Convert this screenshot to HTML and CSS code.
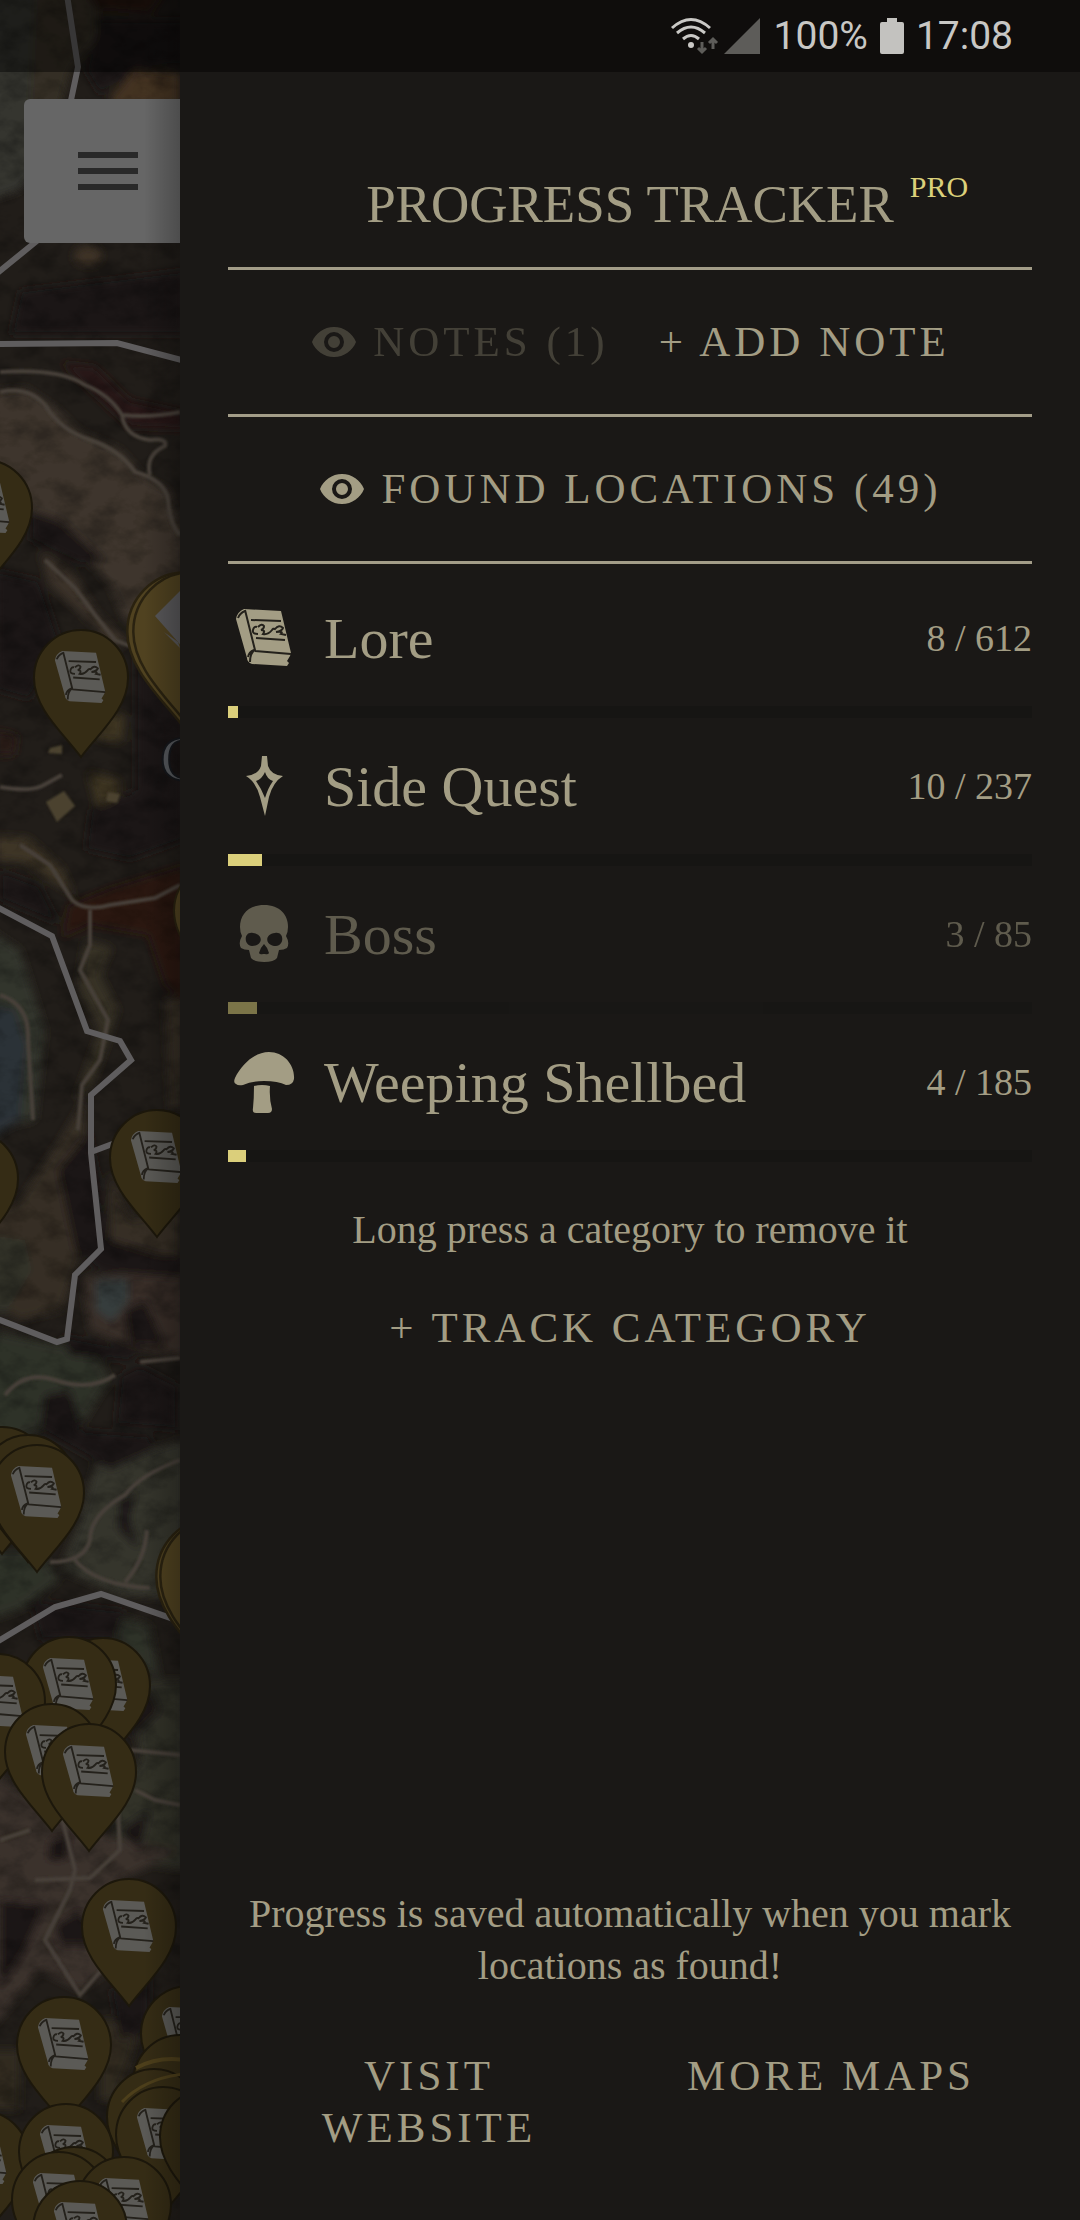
FILE: index.html
```html
<!DOCTYPE html>
<html lang="en">
<head>
    <meta charset="utf-8">
    <meta name="viewport" content="width=device-width, initial-scale=1">
    <title>Progress Tracker</title>
    <link rel="stylesheet" href="styles.css">
</head>
<body>
    <!-- shared shapes -->
    <svg class="defs" width="0" height="0" aria-hidden="true">
        <symbol id="book" viewBox="0 0 58 60">
            <path fill="currentColor" d="M9 1 L46 3 L56 45 L55 48 L52 53 L54 55 L52 58 L17 56 Q12 54 12 50 L1 11 Q2 4 9 1 Z"/>
            <path class="book-ink" d="M10 2 L20 42 Q15 45 15 54 M3 10 Q5 5 10 3 M13 49 Q14 44 19 42 M20 43 L56 46"/>
            <path class="book-ink" d="M16 12 L46 13 M21 30 L50 32"/>
            <path class="book-ink" d="M23 26 Q17 26 18 22 Q19 18 22 19 M23 19 Q27 15 29 18 Q29 21 26 22 Q31 22 28 26 Q33 27 37 22 Q38 20 40 21 Q44 16 48 20 Q47 23 41 24 Q49 23 46 26 L51 27"/>
        </symbol>
        <symbol id="pin" viewBox="-1 -1 96 130">
            <path class="pin-shape" d="M47 127 C28 102 0 78 0 48 A47 48 0 0 1 94 48 C94 78 66 102 47 127 Z"/>
        </symbol>
        <symbol id="lore-pin" viewBox="-1 -1 96 130">
            <path class="pin-shape" d="M47 127 C28 102 0 78 0 48 A47 48 0 0 1 94 48 C94 78 66 102 47 127 Z"/>
            <use href="#book" x="20" y="20" width="53" height="55"/>
        </symbol>
        <symbol id="eye" viewBox="0 0 24 24">
            <path fill="currentColor" d="M12 4.500C7 4.500 2.730 7.610 1 12c1.730 4.390 6 7.500 11 7.500s9.270-3.110 11-7.500c-1.730-4.390-6-7.500-11-7.500zM12 17a5 5 0 1 1 0-10 5 5 0 0 1 0 10zm0-8a3 3 0 1 0 0 6 3 3 0 0 0 0-6z"/>
        </symbol>
    </svg>

    <header class="status-bar">
        <svg class="wifi" viewBox="0 0 50 38" aria-label="Wi-Fi">
            <g fill="none" stroke="#cac9c6" stroke-width="3">
                <path d="M2 11 Q21 -6 40 11"/>
                <path d="M7 16 Q21 4 35 16"/>
                <path d="M13 22 Q21 15 29 22"/>
            </g>
            <circle cx="21" cy="28" r="3" fill="#cac9c6"/>
            <path d="M32 25 V35 M28 31 L32 35 L36 31 M43 32 V22 M39 26 L43 22 L47 26" fill="none" stroke="#5d5c59" stroke-width="3"/>
        </svg>
        <svg class="signal" viewBox="0 0 36 36" aria-label="Signal"><path d="M36 0 V36 H0 Z" fill="#5d5c59"/></svg>
        <span>100%</span>
        <svg class="battery" viewBox="0 0 24 36" aria-label="Battery"><path d="M7 0 H17 V4 H22 Q24 4 24 6 V34 Q24 36 22 36 H2 Q0 36 0 34 V6 Q0 4 2 4 H7 Z" fill="#c3c2bf"/></svg>
        <span>17:08</span>
    </header>

    <div class="app">
        <div class="map">
            <svg class="map-canvas" viewBox="0 0 180 2220" preserveAspectRatio="xMinYMin slice" aria-hidden="true">
                <defs>
                    <filter id="soft" x="-10%" y="-10%" width="120%" height="120%"><feGaussianBlur stdDeviation="4"/></filter>
                    <filter id="road-soft" x="-10%" y="-10%" width="120%" height="120%"><feGaussianBlur stdDeviation="1"/></filter>
                    <filter id="grain" x="0" y="0" width="100%" height="100%">
                        <feTurbulence type="fractalNoise" baseFrequency="0.035 0.05" numOctaves="5" seed="7"/>
                        <feColorMatrix values="0 0 0 0 0  0 0 0 0 0  0 0 0 0 0  2.6 0 0 0 -1.1"/>
                    </filter>
                </defs>
                <rect width="180" height="2220" fill="#211d19"/>

                <!-- terrain -->
                <g class="terrain">
                <g filter="url(#soft)">
                    <path fill="#35352f" d="M-10 -10 H40 L35 70 L50 150 L20 190 L-10 200 Z"/>
                    <path fill="#352e23" d="M35 -10 H100 L95 40 L70 72 L60 110 H30 Z"/>
                    <path fill="#2a1511" d="M85 -8 H165 L150 14 L100 10 Z"/>
                    <path fill="#46301a" d="M110 98 L135 70 L180 74 V105 H110 Z"/>
                    <ellipse fill="#3f3020" cx="88" cy="256" rx="14" ry="10"/>
                    <path fill="#2a1712" d="M60 362 L95 366 L130 400 L185 412 V430 L130 428 L100 400 Z"/>
                    <path fill="#403629" d="M-10 392 L25 388 L55 408 L80 432 L120 450 L145 478 L168 490 L185 550 V640 H165 L125 620 L110 585 L60 530 L30 510 L-10 500 Z"/>
                    <path fill="#3d3226" d="M40 552 L70 570 L95 610 L128 642 L115 650 L80 612 L50 585 Z"/>
                    <path fill="#40351f" d="M92 708 L125 716 L122 742 L98 740 Z M88 772 L120 780 L116 806 L98 812 Z"/>
                    <path fill="#2e1a16" d="M-5 730 L18 735 L15 755 L-5 756 Z"/>
                    <path fill="#403624" d="M-5 836 L28 838 L62 868 L74 895 L50 880 L25 862 L-5 860 Z"/>
                    <path fill="#2e1511" d="M68 905 L110 888 L185 865 V1005 L165 985 L148 935 L90 925 L62 938 Z"/>
                    <path fill="#383024" d="M85 940 L112 948 L100 975 L118 1010 L105 1050 L90 1090 L75 1100 L100 1030 L78 985 Z"/>
                    <path fill="#33342a" d="M-10 930 L20 950 L45 1030 L35 1120 L-10 1130 Z"/>
                    <path fill="#2b3337" d="M-10 1005 L15 1010 L26 1045 L20 1120 L-10 1140 Z"/>
                    <path fill="#382d24" d="M60 1140 L84 1100 L90 1230 L78 1260 L62 1310 L20 1320 L-10 1300 V1215 L20 1200 Z"/>
                    <path fill="#382d24" d="M110 1170 L130 1220 L180 1210 V1260 L110 1250 Z M165 1000 H185 V1110 H170 Z"/>
                    <path fill="#303126" d="M-10 1235 L25 1240 L32 1270 L5 1315 L-10 1310 Z"/>
                    <path fill="#3a2f25" d="M82 1278 L130 1272 L185 1278 V1355 L140 1350 L90 1330 Z"/>
                    <path fill="#343c3e" d="M96 1280 H128 V1300 L112 1322 L96 1310 Z"/>
                    <path fill="#2d3025" d="M-10 1330 L60 1345 L90 1340 L110 1380 L85 1420 L40 1430 L-10 1450 Z"/>
                    <path fill="#34342a" d="M95 1465 L185 1440 V1600 L120 1595 L60 1570 L80 1520 Z"/>
                    <path fill="#2d3025" d="M-10 1550 H40 L60 1580 L20 1610 L-10 1620 Z M100 1610 L150 1625 L160 1680 L120 1650 Z"/>
                    <path fill="#303127" d="M130 1680 H185 V1870 L120 1860 L110 1800 L140 1760 Z"/>
                    <path fill="#3c332b" d="M-10 1770 L50 1810 L120 1840 L180 1850 L120 1880 L80 1930 L110 1970 L80 1990 L40 1970 L-10 2030 Z"/>
                    <path fill="#33291f" d="M100 2020 H140 L130 2060 L115 2100 H100 Z M-10 2050 H20 V2110 H-10 Z"/>
                    <g fill="#1c1917">
                        <path d="M100 20 H185 V65 L140 68 L100 95 L85 70 Z M20 290 L185 270 V335 H10 Z"/>
                        <path d="M30 510 L60 520 L105 560 L80 565 L30 540 Z M-5 570 L40 580 L60 640 L30 700 L-5 690 Z"/>
                        <path d="M135 650 L185 710 V840 L130 860 L85 850 L90 810 L135 790 Z M0 870 L40 885 L60 925 L0 900 Z"/>
                        <path d="M58 1170 L90 1130 L110 1240 L160 1255 H185 V1278 L100 1272 L75 1250 Z"/>
                        <path d="M125 1310 L145 1300 L165 1345 L130 1345 Z M60 1335 L140 1350 L130 1362 L70 1355 Z"/>
                        <path d="M120 1375 L140 1365 L178 1385 V1430 L115 1425 Z M45 1395 L70 1390 L82 1430 L150 1435 L155 1450 L110 1470 L40 1430 Z"/>
                        <path d="M120 1500 L135 1490 L130 1520 L140 1550 L118 1530 Z M30 1600 L125 1610 L115 1640 L40 1640 Z"/>
                        <path d="M130 1700 L150 1690 L160 1710 L130 1740 Z M120 1830 L150 1810 L140 1850 Z M50 1840 L70 1835 L66 1860 H48 Z"/>
                        <path d="M55 1925 L80 1910 L100 1945 L60 1945 Z M0 1900 L45 1905 L25 1950 L0 1990 Z M110 1990 L150 1975 V2030 L120 2040 Z"/>
                    </g>
                </g>
                <rect width="180" height="2220" filter="url(#grain)" opacity="0.25"/>

                <!-- roads -->
                <g class="roads" filter="url(#road-soft)">
                    <path d="M0 372 Q60 368 85 385 Q110 395 122 415 Q150 418 180 412 M122 415 Q125 437 150 440 Q168 438 165 446 Q145 455 150 475"/>
                    <path d="M0 392 Q28 386 45 405 Q60 430 90 440 Q120 450 135 472 Q165 480 168 500 Q170 525 180 535"/>
                    <path d="M45 560 L75 588 L95 615 L115 640 L130 646"/>
                    <path d="M0 787 Q30 792 42 786 L62 775"/>
                    <path d="M20 845 L50 865 L72 900 Q85 912 110 905 L155 898 L180 885 M90 910 V945 L80 970 L108 1020 L100 1060 L82 1085 L78 1130"/>
                    <path d="M0 995 Q30 1005 28 1040 L33 1120"/>
                    <path d="M5 1395 Q25 1370 55 1380 Q90 1392 115 1375 M140 1362 L180 1358"/>
                    <path d="M180 1460 Q140 1475 125 1495 Q90 1515 90 1540 Q85 1562 50 1562 M75 1560 Q95 1585 150 1588 M147 1530 Q145 1560 125 1582"/>
                    <path d="M60 1810 L75 1870 L70 1890 L45 1940 L80 1995 L110 1960 M0 1840 L30 1830 M35 1880 L90 1878 L120 1850 L118 1810 M130 1750 L180 1755 M135 1790 L155 1800 L180 1805"/>
                </g>
                <path fill="#4d432b" filter="url(#road-soft)" d="M46 802 L64 791 L75 806 L57 822 Z M50 748 L62 745 L62 754 L48 753 Z M108 792 L120 794 L117 803 L106 801 Z"/>
                </g>
                <text class="place" x="160" y="780">C</text>

                <!-- region borders -->
                <g class="borders">
                    <path d="M67 -5 L78 67 L70 105 M38 240 L-5 275"/>
                    <path d="M-5 344 L117 343 L185 361"/>
                    <path d="M-5 906 L52 936 L87 1031 L120 1041 L131 1060 L91 1095 V1153 L101 1249 L75 1275 L67 1339 L57 1342 L-5 1318 M91 1152 L115 1143"/>
                    <path d="M-5 1643 L55 1607 L101 1594 L185 1623"/>
                </g>

                <!-- markers -->
                <g class="pins">
                    <use href="#lore-pin" x="-63" y="459" width="96" height="130"/>
                    <use href="#lore-pin" x="33" y="629" width="96" height="130"/>
                    <g class="gold">
                        <use href="#pin" x="126" y="571" width="119" height="161"/>
                        <use href="#pin" x="132" y="571" width="119" height="161"/>
                        <use href="#pin" x="173" y="862" width="96" height="130"/>
                        <use href="#pin" x="155" y="1516" width="119" height="161"/>
                        <use href="#pin" x="159" y="1516" width="119" height="161"/>
                    </g>
                    <path fill="#59585a" d="M155 616 L185 586 V650 Z M164 632 L180 648 L178 642 Z"/>
                    <use href="#lore-pin" x="109" y="1109" width="96" height="130"/>
                    <use href="#lore-pin" x="-77" y="1130" width="96" height="130"/>
                    <use href="#pin" x="-46" y="1426" width="96" height="130"/>
                    <use href="#pin" x="-20" y="1434" width="96" height="130"/>
                    <use href="#lore-pin" x="-11" y="1444" width="96" height="130"/>
                    <use href="#lore-pin" x="55" y="1637" width="96" height="130"/>
                    <use href="#lore-pin" x="21" y="1636" width="96" height="130"/>
                    <use href="#lore-pin" x="-50" y="1653" width="96" height="130"/>
                    <use href="#lore-pin" x="4" y="1703" width="96" height="130"/>
                    <use href="#lore-pin" x="41" y="1723" width="96" height="130"/>
                    <use href="#lore-pin" x="81" y="1878" width="96" height="130"/>
                    <use href="#lore-pin" x="140" y="1985" width="96" height="130"/>
                    <use href="#lore-pin" x="16" y="1996" width="96" height="130"/>
                    <use href="#pin" x="132" y="2034" width="96" height="130"/>
                    <path fill="none" stroke="#4d3f1b" stroke-width="4" d="M136 2068 Q158 2056 185 2060"/>
                    <use href="#pin" x="106" y="2068" width="96" height="130"/>
                    <path fill="none" stroke="#4d3f1b" stroke-width="3" d="M122 2102 Q145 2078 185 2074"/>
                    <use href="#lore-pin" x="115" y="2086" width="96" height="130"/>
                    <use href="#pin" x="159" y="2088" width="96" height="130"/>
                    <use href="#lore-pin" x="-66" y="2110" width="96" height="130"/>
                    <use href="#lore-pin" x="18" y="2103" width="96" height="130"/>
                    <use href="#pin" x="26" y="2146" width="96" height="130"/>
                    <use href="#lore-pin" x="11" y="2151" width="96" height="130"/>
                    <use href="#lore-pin" x="76" y="2156" width="96" height="130"/>
                    <use href="#lore-pin" x="32" y="2180" width="96" height="130"/>
                </g>
            </svg>
            <button class="menu-btn" aria-label="Menu">
                <span></span>
                <span></span>
                <span></span>
            </button>
        </div>

        <main class="drawer">
            <h1 class="title"><span class="title-text">PROGRESS TRACKER<sup class="pro">PRO</sup></span></h1>

            <div class="toolbar">
                <button class="text-btn off"><svg class="eye"><use href="#eye"/></svg>NOTES (1)</button>
                <button class="text-btn">+ ADD NOTE</button>
            </div>
            <div class="toolbar">
                <button class="text-btn"><svg class="eye"><use href="#eye"/></svg>FOUND LOCATIONS (49)</button>
            </div>

            <ul class="categories">
                <li class="category">
                    <button class="category-btn">
                        <svg class="category-icon" viewBox="0 0 72 72"><use href="#book" x="7" y="6" width="58" height="60"/></svg>
                        <span class="category-name">Lore</span>
                        <span class="category-count">8 / 612</span>
                    </button>
                    <div class="bar"><div class="bar-fill" style="width: 1.300%"></div></div>
                </li>
                <li class="category">
                    <button class="category-btn">
                        <svg class="category-icon" viewBox="0 0 72 72">
                            <path fill="currentColor" fill-rule="evenodd" d="M34 6 H39 L40 16 Q43 25 55 26 Q45 32 41 47 L37 66 L32 47 Q28 32 18 26 Q30 25 33 16 Z M37 22 Q34 29 28 31 Q33 38 37 48 Q40 38 45 31 Q39 29 37 22 Z"/>
                        </svg>
                        <span class="category-name">Side Quest</span>
                        <span class="category-count">10 / 237</span>
                    </button>
                    <div class="bar"><div class="bar-fill" style="width: 4.200%"></div></div>
                </li>
                <li class="category off">
                    <button class="category-btn">
                        <svg class="category-icon" viewBox="0 0 72 72">
                            <path fill="currentColor" fill-rule="evenodd" d="M36 7 C52 7 60 17 60 29 Q60 34 58 38 Q62 45 59 50 Q56 52 51 52 Q50 56 49 60 Q46 64 36 64 Q26 64 23 60 Q22 56 21 52 Q16 52 13 50 Q10 45 14 38 Q12 34 12 29 C12 17 20 7 36 7 Z M25 35 C16 33 15 47 24 48 C35 48 36 36 25 35 Z M47 35 C36 36 37 48 48 48 C57 47 56 33 47 35 Z M36 46 Q32 50 31 55 Q32 57 35 56 H37 Q40 57 41 55 Q40 50 36 46 Z"/>
                        </svg>
                        <span class="category-name">Boss</span>
                        <span class="category-count">3 / 85</span>
                    </button>
                    <div class="bar"><div class="bar-fill" style="width: 3.600%"></div></div>
                </li>
                <li class="category">
                    <button class="category-btn">
                        <svg class="category-icon" viewBox="0 0 72 72">
                            <path fill="currentColor" d="M8 38 Q5 37 7 32 C14 18 27 6 41 6 C56 6 67 19 66 33 Q65 39 58 39 Q50 35 36 35 Q24 35 15 39 Q10 40 8 38 Z"/>
                            <path fill="currentColor" d="M26 40 Q34 38 42 40 Q41 52 44 63 Q44 67 40 67 H28 Q24 67 25 62 Q26 52 26 40 Z"/>
                        </svg>
                        <span class="category-name">Weeping Shellbed</span>
                        <span class="category-count">4 / 185</span>
                    </button>
                    <div class="bar"><div class="bar-fill" style="width: 2.200%"></div></div>
                </li>
            </ul>

            <p class="hint">Long press a category to remove it</p>
            <button class="text-btn track-btn">+ TRACK CATEGORY</button>

            <footer class="footer">
                <p class="hint">Progress is saved automatically when you mark locations as found!</p>
                <nav class="links">
                    <a class="text-btn" href="#website">VISIT WEBSITE</a>
                    <a class="text-btn" href="#maps">MORE MAPS</a>
                </nav>
            </footer>
        </main>
    </div>
</body>
</html>
```
FILE: styles.css
```css
* {
    box-sizing: border-box;
}
body {
    margin: 0;
    background-color: #1a1816;
    color: #a39d84;
    font-family: "Liberation Serif", serif;
}
button {
    padding: 0;
    border: none;
    background: none;
    color: inherit;
    font: inherit;
    cursor: pointer;
}
h1, p, ul {
    margin: 0;
    padding: 0;
}
.defs {
    position: absolute;
}

/* status bar lies over the map and the drawer */
.status-bar {
    position: absolute;
    top: 0;
    left: 0;
    right: 0;
    z-index: 2;
    display: flex;
    align-items: center;
    justify-content: flex-end;
    height: 72px;
    padding-right: 67px;
    background-color: rgba(0, 0, 0, 0.42);
    color: #c8c7c4;
    font-family: Roboto, sans-serif;
    font-size: 39px;
}
.wifi {
    width: 50px;
    height: 38px;
    margin-right: 4px;
}
.signal {
    width: 36px;
    height: 36px;
    margin-right: 14px;
}
.battery {
    width: 24px;
    height: 36px;
    margin: 0 12px;
}

.app {
    display: grid;
    grid-template-columns: 1fr 5fr;
    min-height: 100vh;
}

/* map */
.map {
    position: relative;
    overflow: hidden;
}
.map::after {
    content: "";
    position: absolute;
    top: 0;
    right: 0;
    bottom: 0;
    width: 36px;
    background: linear-gradient(to right, transparent, rgba(0, 0, 0, 0.25));
}
.map-canvas {
    position: absolute;
    width: 100%;
    height: 100%;
}
.terrain {
    filter: saturate(0.8);
}
.menu-btn {
    position: absolute;
    top: 99px;
    left: 24px;
    display: flex;
    flex-direction: column;
    justify-content: center;
    gap: 10px;
    width: 168px;
    height: 144px;
    padding-left: 54px;
    border-radius: 6px;
    background-color: #666666;
}
.menu-btn span {
    width: 60px;
    height: 6px;
    background-color: #292929;
}
.book-ink {
    fill: none;
    stroke: #24211b;
    stroke-width: 2;
}
.pins {
    color: #5b5a56;
}
.pin-shape {
    fill: #352c15;
    stroke: #1c170b;
    stroke-width: 2;
}
.gold use {
    filter: brightness(1.5);
}
.roads {
    fill: none;
    stroke: #484137;
    stroke-width: 4;
}
.borders {
    fill: none;
    stroke: #5f5d5e;
    stroke-width: 6;
}
.place {
    fill: #55585c;
    stroke: #15171b;
    stroke-width: 2;
    font-size: 64px;
}

/* drawer */
.drawer {
    display: flex;
    flex-direction: column;
    padding: 172px 48px 66px;
    background-color: #1a1816;
}
.title {
    padding-bottom: 31px;
    border-bottom: 3px solid #a39d88;
    font-size: 53px;
    font-weight: normal;
    line-height: 64px;
    text-align: center;
}
.title-text {
    position: relative;
}
.pro {
    position: absolute;
    left: 100%;
    top: -4px;
    margin-left: 16px;
    color: #dbd07a;
    font-size: 30px;
    line-height: 32px;
}
.toolbar {
    display: flex;
    align-items: center;
    justify-content: center;
    gap: 50px;
    height: 147px;
    border-bottom: 3px solid #a39d88;
}
.text-btn {
    display: flex;
    align-items: center;
    justify-content: center;
    color: #a39d84;
    font-size: 43px;
    line-height: 52px;
    letter-spacing: 4px;
    text-align: center;
    text-decoration: none;
}
.text-btn.off {
    opacity: 0.3;
}
.eye {
    width: 48px;
    height: 48px;
    margin-right: 15px;
}

.categories {
    margin-top: 6px;
    list-style: none;
}
.category.off {
    opacity: 0.5;
}
.category-btn {
    display: flex;
    align-items: center;
    width: 100%;
    height: 136px;
    text-align: left;
}
.category-icon {
    width: 72px;
    height: 72px;
    margin-right: 24px;
}
.category-name {
    flex: 1;
    font-size: 58px;
}
.category-count {
    font-size: 38px;
}
.bar {
    height: 12px;
    background-color: #161513;
}
.bar-fill {
    height: 100%;
    background-color: #dbcf7b;
}

.hint {
    margin-top: 42px;
    font-size: 40px;
    line-height: 52px;
    text-align: center;
}
.track-btn {
    margin-top: 46px;
}
.footer {
    margin-top: auto;
}
.links {
    display: grid;
    grid-template-columns: 1fr 1fr;
    align-items: start;
    margin-top: 58px;
}
.links .text-btn {
    padding: 0 36px;
}
```
